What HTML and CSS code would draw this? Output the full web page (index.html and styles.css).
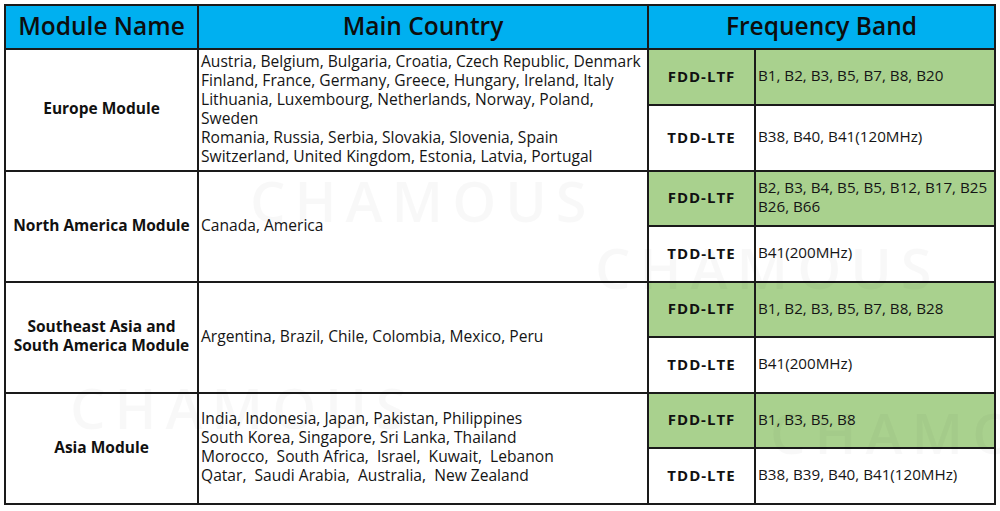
FILE: index.html
```html
<!DOCTYPE html>
<html>
<head>
<meta charset="utf-8">
<link rel="stylesheet" href="styles.css">
</head>
<body>
<div class="wrap">
<table class="bands">
  <colgroup>
    <col class="c-mod"><col class="c-country"><col class="c-type"><col class="c-band">
  </colgroup>
  <thead>
    <tr class="head">
      <th>Module Name</th>
      <th>Main Country</th>
      <th colspan="2">Frequency Band</th>
    </tr>
  </thead>
  <tbody>
    <tr class="r-eu1">
      <td rowspan="2" class="mod">Europe Module</td>
      <td rowspan="2" class="country">Austria, Belgium, Bulgaria, Croatia, Czech Republic, Denmark<br>Finland, France, Germany, Greece, Hungary, Ireland, Italy<br>Lithuania, Luxembourg, Netherlands, Norway, Poland,<br>Sweden<br>Romania, Russia, Serbia, Slovakia, Slovenia, Spain<br>Switzerland, United Kingdom, Estonia, Latvia, Portugal</td>
      <td class="type fdd">FDD-LTF</td>
      <td class="band fdd">B1, B2, B3, B5, B7, B8, B20</td>
    </tr>
    <tr class="r-eu2">
      <td class="type">TDD-LTE</td>
      <td class="band">B38, B40, B41(120MHz)</td>
    </tr>
    <tr class="r-a">
      <td rowspan="2" class="mod">North America Module</td>
      <td rowspan="2" class="country">Canada, America</td>
      <td class="type fdd">FDD-LTF</td>
      <td class="band fdd">B2, B3, B4, B5, B5, B12, B17, B25<br>B26, B66</td>
    </tr>
    <tr class="r-b">
      <td class="type">TDD-LTE</td>
      <td class="band">B41(200MHz)</td>
    </tr>
    <tr class="r-a">
      <td rowspan="2" class="mod">Southeast Asia and<br>South America Module</td>
      <td rowspan="2" class="country">Argentina, Brazil, Chile, Colombia, Mexico, Peru</td>
      <td class="type fdd">FDD-LTF</td>
      <td class="band fdd">B1, B2, B3, B5, B7, B8, B28</td>
    </tr>
    <tr class="r-b">
      <td class="type">TDD-LTE</td>
      <td class="band">B41(200MHz)</td>
    </tr>
    <tr class="r-a">
      <td rowspan="2" class="mod">Asia Module</td>
      <td rowspan="2" class="country">India, Indonesia, Japan, Pakistan, Philippines<br>South Korea, Singapore, Sri Lanka, Thailand<br>Morocco,&nbsp; South Africa,&nbsp; Israel,&nbsp; Kuwait,&nbsp; Lebanon<br>Qatar,&nbsp; Saudi Arabia,&nbsp; Australia,&nbsp; New Zealand</td>
      <td class="type fdd">FDD-LTF</td>
      <td class="band fdd">B1, B3, B5, B8</td>
    </tr>
    <tr class="r-b">
      <td class="type">TDD-LTE</td>
      <td class="band">B38, B39, B40, B41(120MHz)</td>
    </tr>
  </tbody>
</table>
<div class="wm wm1">CHAMOUS</div>
<div class="wm wm2">CHAMOUS</div>
<div class="wm wm3">CHAMOUS</div>
<div class="wm wm4">CHAMOUS</div>
</div>
</body>
</html>
```

FILE: styles.css
```css
html, body {
  margin: 0;
  padding: 0;
  background: #ffffff;
}
.wrap {
  position: relative;
  width: 1000px;
  height: 511px;
  overflow: hidden;
  padding: 4px 0 0 4px;
  box-sizing: border-box;
}
.bands {
  border-collapse: collapse;
  table-layout: fixed;
  width: 990px;
  font-family: "Open Sans", "Noto Sans", sans-serif;
  color: #111;
}
.c-mod { width: 193px; }
.c-country { width: 450px; }
.c-type { width: 107px; }
.c-band { width: 240px; }
.bands th, .bands td {
  border: 2px solid #1a1a1a;
  padding: 0 0 3px 0;
}
.bands .head th {
  background: #00b0f0;
  height: 41px;
  padding: 0 0 1px 0;
  font-size: 24.5px;
  font-weight: 600;
  color: #0d0d0d;
  text-align: center;
  vertical-align: middle;
  line-height: 1;
}
.r-eu1 td.type, .r-eu1 td.band { height: 51px; }
.r-eu2 td { height: 61px; }
.r-a td.type, .r-a td.band { height: 50px; }
.r-b td { height: 51px; }
.mod {
  font-size: 15.5px;
  font-weight: 700;
  text-align: center;
  line-height: 19px;
}
.country {
  font-size: 15.6px;
  line-height: 19px;
  padding-left: 2px !important;
  color: #151515;
  white-space: nowrap;
}
.type {
  font-size: 15px;
  font-weight: 700;
  text-align: center;
  letter-spacing: 1px;
}
.band {
  font-size: 15.2px;
  line-height: 19px;
  padding-left: 2px !important;
  color: #151515;
  white-space: nowrap;
}
.fdd { background: #a9d18e; }
.wm {
  position: absolute;
  font-family: "Open Sans", sans-serif;
  font-size: 56px;
  font-weight: 600;
  letter-spacing: 9px;
  color: rgba(0, 0, 0, 0.028);
  pointer-events: none;
  white-space: nowrap;
  line-height: 1;
}
.wm1 { left: 250px; top: 172px; }
.wm2 { left: 595px; top: 239px; }
.wm3 { left: 70px; top: 379px; }
.wm4 { left: 770px; top: 404px; }
```
